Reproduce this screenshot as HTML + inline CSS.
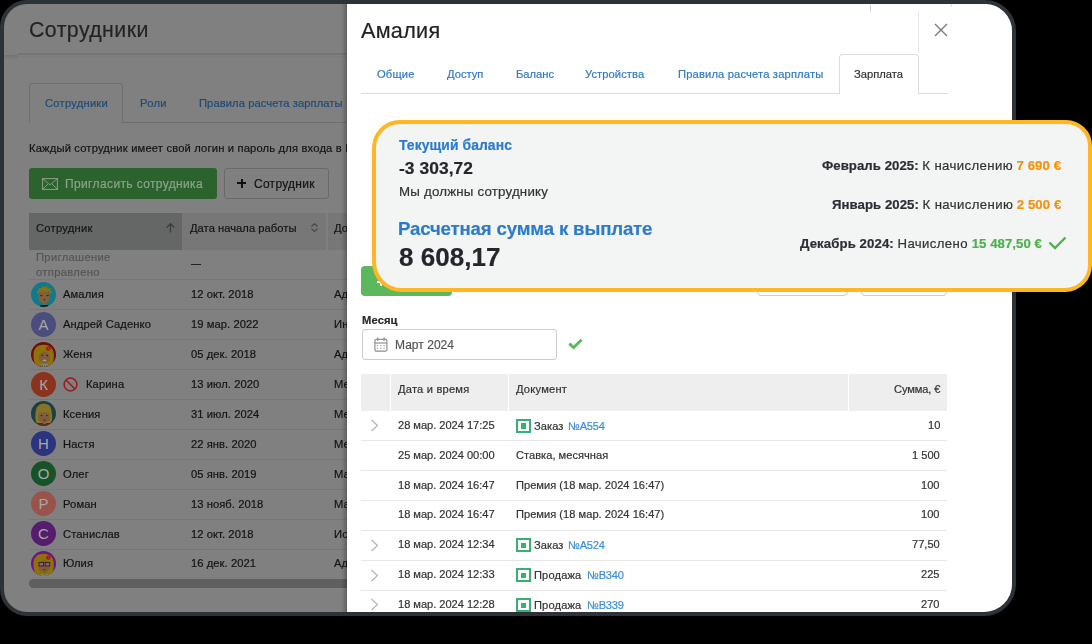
<!DOCTYPE html>
<html><head><meta charset="utf-8"><style>
html,body{margin:0;padding:0;}
body{width:1092px;height:644px;background:#000;position:relative;overflow:hidden;font-family:"Liberation Sans",sans-serif;}
.frame{position:absolute;left:0;top:0;width:1016px;height:616px;box-sizing:border-box;border:4px solid #2c3237;border-radius:27px 31px 32px 27px;overflow:hidden;background:#808080;}
.pg{position:absolute;left:-4px;top:-4px;width:1092px;height:644px;}
.t{position:absolute;white-space:nowrap;will-change:transform;-webkit-text-stroke:0.2px currentColor;}
.r{position:absolute;}
.av{width:25px;height:25px;border-radius:50%;color:#a8a8a8;font-size:15px;line-height:25px;text-align:center;}
</style></head><body>
<div class="frame"><div class="pg">
<div class="r" style="left:18.00px;top:52.90px;width:994.00px;height:2.60px;background:linear-gradient(#767676,#727272)"></div>
<div class="r" style="left:18.00px;top:55.50px;width:994.00px;height:2.20px;background:linear-gradient(#7a7a7a,#7f7f7f)"></div>
<div class="r" style="left:4.00px;top:54.80px;width:14.00px;height:3.90px;background:linear-gradient(#747474,#7d7d7d)"></div>
<div class="t" style="left:29.20px;top:20.19px;font-size:21.3px;line-height:21.3px;color:#242424;font-weight:400;letter-spacing:0.44px;">Сотрудники</div>
<div class="r" style="left:29.00px;top:122.00px;width:317.00px;height:1.00px;background:#6e6e6e"></div>
<div class="r" style="left:29px;top:82.5px;width:93.6px;height:40px;border:1px solid #6e6e6e;border-bottom:none;border-radius:4px 4px 0 0;background:#808080;box-sizing:border-box"></div>
<div class="t" style="left:44.80px;top:97.78px;font-size:11.2px;line-height:11.2px;color:#1f4a77;font-weight:400;letter-spacing:0.24px;">Сотрудники</div>
<div class="t" style="left:140.10px;top:97.78px;font-size:11.2px;line-height:11.2px;color:#1f4a77;font-weight:400;letter-spacing:0.3px;">Роли</div>
<div class="t" style="left:198.90px;top:97.78px;font-size:11.2px;line-height:11.2px;color:#1f4a77;font-weight:400;letter-spacing:0.08px;">Правила расчета зарплаты</div>
<div class="t" style="left:29.00px;top:142.68px;font-size:11.2px;line-height:11.2px;color:#141414;font-weight:400;letter-spacing:0.17px;">Каждый сотрудник имеет свой логин и пароль для входа в R</div>
<div class="r" style="left:29.00px;top:168.00px;width:188.00px;height:31.00px;background:#2b622d;border-radius:3px"></div>
<svg class="r" style="left:42px;top:178px" width="16" height="12" viewBox="0 0 16 12"><rect x="0.6" y="0.6" width="14.8" height="10.8" fill="none" stroke="#8aa08a" stroke-width="1"/><path d="M1 1 L8 6.8 L15 1 M1 11 L6 6 M15 11 L10 6" fill="none" stroke="#8aa08a" stroke-width="0.9"/></svg>
<div class="t" style="left:64.70px;top:178.30px;font-size:12px;line-height:12px;color:#8ca28c;font-weight:400;letter-spacing:0.37px;">Пригласить сотрудника</div>
<div class="r" style="left:224.3px;top:168px;width:104.4px;height:31px;border:1px solid #6a6a6a;border-radius:3px;box-sizing:border-box"></div>
<div class="r" style="left:237.30px;top:182.10px;width:9.20px;height:2.40px;background:#111"></div>
<div class="r" style="left:240.70px;top:178.70px;width:2.40px;height:9.20px;background:#111"></div>
<div class="t" style="left:254.30px;top:178.30px;font-size:12px;line-height:12px;color:#141414;font-weight:400;letter-spacing:0.27px;">Сотрудник</div>
<div class="r" style="left:29.00px;top:213.30px;width:153.00px;height:37.20px;background:#646765"></div>
<div class="r" style="left:182.00px;top:213.30px;width:143.60px;height:37.20px;background:#777777"></div>
<div class="r" style="left:325.60px;top:213.30px;width:1.80px;height:37.20px;background:#7e7e7e"></div>
<div class="r" style="left:327.70px;top:213.30px;width:19.30px;height:37.20px;background:#777777"></div>
<div class="t" style="left:36.30px;top:223.48px;font-size:11.2px;line-height:11.2px;color:#141414;font-weight:400;letter-spacing:0.25px;">Сотрудник</div>
<div class="t" style="left:190.20px;top:223.48px;font-size:11.2px;line-height:11.2px;color:#141414;font-weight:400;letter-spacing:0.03px;">Дата начала работы</div>
<div class="t" style="left:333.60px;top:223.48px;font-size:11.2px;line-height:11.2px;color:#141414;font-weight:400;letter-spacing:0.1px;">Должность</div>
<svg class="r" style="left:165px;top:222px" width="11" height="12" viewBox="0 0 11 12"><path d="M5.5 10.5 V1.8 M1.6 5.6 L5.5 1.7 L9.4 5.6" fill="none" stroke="#3c3c3c" stroke-width="1.3"/></svg>
<svg class="r" style="left:310px;top:222px" width="9" height="11" viewBox="0 0 9 11"><path d="M1.5 4.5 L4.5 1.8 L7.5 4.5 M1.5 6.7 L4.5 9.4 L7.5 6.7" fill="none" stroke="#444" stroke-width="1.1"/></svg>
<div class="t" style="left:36.30px;top:252.38px;font-size:11.2px;line-height:11.2px;color:#555555;font-weight:400;letter-spacing:0.33px;">Приглашение</div>
<div class="t" style="left:36.30px;top:266.68px;font-size:11.2px;line-height:11.2px;color:#555555;font-weight:400;letter-spacing:0.33px;">отправлено</div>
<div class="r" style="left:190.80px;top:263.60px;width:9.80px;height:1.20px;background:#222"></div>
<div class="r" style="left:29.00px;top:279.40px;width:318.00px;height:1.00px;background:#777777"></div>
<div class="r" id="img1" style="left:31px;top:281.85px;width:25px;height:25px"><svg width="25" height="25" viewBox="0 0 25 25"><defs><clipPath id="c107a8c"><circle cx="12.5" cy="12.5" r="12.5"/></clipPath></defs><g clip-path="url(#c107a8c)"><rect width="25" height="25" fill="#107a8c"/><ellipse cx="13.2" cy="15" rx="6" ry="6.6" fill="#82603a"/><rect x="11.8" y="20" width="3" height="3" fill="#82603a"/><path d="M9.5 23 H17 L17.5 25 H9 Z" fill="#1c1c1c"/><path d="M6.5 12 L5.5 9 L8 8.5 L7.5 5.5 L10.5 6.5 L11.5 3.5 L13.5 5.5 L16 3.5 L16.5 6.5 L20 6 L19 9 L21.5 9.5 L19.5 12 L18 9.5 L14 9.2 L9.5 9.8 Z" fill="#857317"/><ellipse cx="10.3" cy="13.6" rx="1.3" ry="0.6" fill="#222"/><ellipse cx="16.7" cy="13.6" rx="1.3" ry="0.6" fill="#222"/><path d="M12.2 17.2 H14.6 L13.4 18.6 Z" fill="#3e2418"/></g></svg></div>
<div class="t" style="left:63.10px;top:289.38px;font-size:11.2px;line-height:11.2px;color:#141414;font-weight:400;letter-spacing:0.1px;">Амалия</div>
<div class="t" style="left:190.60px;top:289.38px;font-size:11.2px;line-height:11.2px;color:#141414;font-weight:400;letter-spacing:0.06px;">12 окт. 2018</div>
<div class="t" style="left:333.60px;top:289.38px;font-size:11.2px;line-height:11.2px;color:#141414;font-weight:400;letter-spacing:0.1px;">Администратор</div>
<div class="r" style="left:29.00px;top:309.30px;width:318.00px;height:1.00px;background:#777777"></div>
<div class="r av" style="left:31px;top:311.75px;background:#4a4d7e">А</div>
<div class="t" style="left:63.10px;top:319.28px;font-size:11.2px;line-height:11.2px;color:#141414;font-weight:400;letter-spacing:0.1px;">Андрей Саденко</div>
<div class="t" style="left:190.60px;top:319.28px;font-size:11.2px;line-height:11.2px;color:#141414;font-weight:400;letter-spacing:0.06px;">19 мар. 2022</div>
<div class="t" style="left:333.60px;top:319.28px;font-size:11.2px;line-height:11.2px;color:#141414;font-weight:400;letter-spacing:0.1px;">Инженер</div>
<div class="r" style="left:29.00px;top:339.20px;width:318.00px;height:1.00px;background:#777777"></div>
<div class="r" id="img2" style="left:31px;top:341.65px;width:25px;height:25px"><svg width="25" height="25" viewBox="0 0 25 25"><defs><clipPath id="c6e0d0d"><circle cx="12.5" cy="12.5" r="12.5"/></clipPath></defs><g clip-path="url(#c6e0d0d)"><rect width="25" height="25" fill="#6e0d0d"/><path d="M2.5 14 C2 5 8 2.5 13 2.8 C19 3 23 7 22.8 13 C23 18 22 22 19 24 L6 24 C3.5 22 2.5 18 2.5 14 Z" fill="#8c7208"/><ellipse cx="13.5" cy="15.5" rx="5.6" ry="5.8" fill="#7f5d3a"/><path d="M8 10.5 C10 8 15 8 19 10.5 L18.5 8 L13 6.5 L8.5 8 Z" fill="#8c7208"/><circle cx="17.3" cy="6.6" r="2.2" fill="#a81414"/><circle cx="17.3" cy="6.6" r="0.7" fill="#c85050"/><circle cx="11.2" cy="13.3" r="0.8" fill="#3a2a20"/><circle cx="16.2" cy="13.5" r="0.8" fill="#222"/><ellipse cx="13.5" cy="18.4" rx="2" ry="0.9" fill="#9a9a9a"/><rect x="10" y="22.2" width="7" height="2.8" fill="#8a8a8a"/><path d="M10.5 24 h1.5 M13 24 h1 M15 24 h1.5" stroke="#222" stroke-width="0.9"/></g></svg></div>
<div class="t" style="left:63.10px;top:349.18px;font-size:11.2px;line-height:11.2px;color:#141414;font-weight:400;letter-spacing:0.1px;">Женя</div>
<div class="t" style="left:190.60px;top:349.18px;font-size:11.2px;line-height:11.2px;color:#141414;font-weight:400;letter-spacing:0.06px;">05 дек. 2018</div>
<div class="t" style="left:333.60px;top:349.18px;font-size:11.2px;line-height:11.2px;color:#141414;font-weight:400;letter-spacing:0.1px;">Администратор</div>
<div class="r" style="left:29.00px;top:369.10px;width:318.00px;height:1.00px;background:#777777"></div>
<div class="r av" style="left:31px;top:371.55px;background:#8c331d">К</div>
<svg class="r" style="left:63px;top:376.75px" width="15" height="15" viewBox="0 0 15 15"><circle cx="7.5" cy="7.5" r="6.4" fill="none" stroke="#9a1a1a" stroke-width="1.5"/><path d="M3 3 L12 12" stroke="#9a1a1a" stroke-width="1.5"/></svg>
<div class="t" style="left:85.70px;top:379.08px;font-size:11.2px;line-height:11.2px;color:#141414;font-weight:400;letter-spacing:0.1px;">Карина</div>
<div class="t" style="left:190.60px;top:379.08px;font-size:11.2px;line-height:11.2px;color:#141414;font-weight:400;letter-spacing:0.06px;">13 июл. 2020</div>
<div class="t" style="left:333.60px;top:379.08px;font-size:11.2px;line-height:11.2px;color:#141414;font-weight:400;letter-spacing:0.1px;">Менеджер</div>
<div class="r" style="left:29.00px;top:399.00px;width:318.00px;height:1.00px;background:#777777"></div>
<div class="r" id="img3" style="left:31px;top:401.45px;width:25px;height:25px"><svg width="25" height="25" viewBox="0 0 25 25"><defs><clipPath id="c1b4040"><circle cx="12.5" cy="12.5" r="12.5"/></clipPath></defs><g clip-path="url(#c1b4040)"><rect width="25" height="25" fill="#1b4040"/><path d="M5.5 22 C3.5 17 4.5 12 5 9 C6 4 10 2.5 13.5 2.8 C18 3 20.5 6 20.5 10 C21 14 22 19 19.5 22 Z" fill="#857326"/><rect x="7.5" y="11.5" width="11.5" height="9" rx="3" fill="#7f5d3a"/><rect x="11.8" y="19" width="3.2" height="4" fill="#7f5d3a"/><path d="M7 12 C8 6 17 6 19 12 L19 9 C17 4 9 4 7 9 Z" fill="#857326"/><circle cx="10.5" cy="14.5" r="0.8" fill="#3a2420"/><circle cx="16" cy="14.5" r="0.8" fill="#3a2420"/><ellipse cx="13.4" cy="19" rx="1.1" ry="0.6" fill="#1a1a1a"/><path d="M8.5 23.5 L11.5 22.5 L13.4 24 L15.5 22.5 L18.5 23.5 L18.5 25 H8.5 Z" fill="#8e1a1a"/></g></svg></div>
<div class="t" style="left:63.10px;top:408.98px;font-size:11.2px;line-height:11.2px;color:#141414;font-weight:400;letter-spacing:0.1px;">Ксения</div>
<div class="t" style="left:190.60px;top:408.98px;font-size:11.2px;line-height:11.2px;color:#141414;font-weight:400;letter-spacing:0.06px;">31 июл. 2024</div>
<div class="t" style="left:333.60px;top:408.98px;font-size:11.2px;line-height:11.2px;color:#141414;font-weight:400;letter-spacing:0.1px;">Менеджер</div>
<div class="r" style="left:29.00px;top:428.90px;width:318.00px;height:1.00px;background:#777777"></div>
<div class="r av" style="left:31px;top:431.35px;background:#2b347e">Н</div>
<div class="t" style="left:63.10px;top:438.88px;font-size:11.2px;line-height:11.2px;color:#141414;font-weight:400;letter-spacing:0.1px;">Настя</div>
<div class="t" style="left:190.60px;top:438.88px;font-size:11.2px;line-height:11.2px;color:#141414;font-weight:400;letter-spacing:0.06px;">22 янв. 2020</div>
<div class="t" style="left:333.60px;top:438.88px;font-size:11.2px;line-height:11.2px;color:#141414;font-weight:400;letter-spacing:0.1px;">Менеджер</div>
<div class="r" style="left:29.00px;top:458.80px;width:318.00px;height:1.00px;background:#777777"></div>
<div class="r av" style="left:31px;top:461.25px;background:#175228">О</div>
<div class="t" style="left:63.10px;top:468.78px;font-size:11.2px;line-height:11.2px;color:#141414;font-weight:400;letter-spacing:0.1px;">Олег</div>
<div class="t" style="left:190.60px;top:468.78px;font-size:11.2px;line-height:11.2px;color:#141414;font-weight:400;letter-spacing:0.06px;">05 янв. 2019</div>
<div class="t" style="left:333.60px;top:468.78px;font-size:11.2px;line-height:11.2px;color:#141414;font-weight:400;letter-spacing:0.1px;">Мастер</div>
<div class="r" style="left:29.00px;top:488.70px;width:318.00px;height:1.00px;background:#777777"></div>
<div class="r av" style="left:31px;top:491.15px;background:#9a534a">Р</div>
<div class="t" style="left:63.10px;top:498.68px;font-size:11.2px;line-height:11.2px;color:#141414;font-weight:400;letter-spacing:0.1px;">Роман</div>
<div class="t" style="left:190.60px;top:498.68px;font-size:11.2px;line-height:11.2px;color:#141414;font-weight:400;letter-spacing:0.06px;">13 нояб. 2018</div>
<div class="t" style="left:333.60px;top:498.68px;font-size:11.2px;line-height:11.2px;color:#141414;font-weight:400;letter-spacing:0.1px;">Мастер</div>
<div class="r" style="left:29.00px;top:518.60px;width:318.00px;height:1.00px;background:#777777"></div>
<div class="r av" style="left:31px;top:521.05px;background:#561c6e">С</div>
<div class="t" style="left:63.10px;top:528.58px;font-size:11.2px;line-height:11.2px;color:#141414;font-weight:400;letter-spacing:0.1px;">Станислав</div>
<div class="t" style="left:190.60px;top:528.58px;font-size:11.2px;line-height:11.2px;color:#141414;font-weight:400;letter-spacing:0.06px;">12 окт. 2018</div>
<div class="t" style="left:333.60px;top:528.58px;font-size:11.2px;line-height:11.2px;color:#141414;font-weight:400;letter-spacing:0.1px;">Исполнитель</div>
<div class="r" style="left:29.00px;top:548.50px;width:318.00px;height:1.00px;background:#777777"></div>
<div class="r" id="img4" style="left:31px;top:550.95px;width:25px;height:25px"><svg width="25" height="25" viewBox="0 0 25 25"><defs><clipPath id="c6a1488"><circle cx="12.5" cy="12.5" r="12.5"/></clipPath></defs><g clip-path="url(#c6a1488)"><rect width="25" height="25" fill="#6a1488"/><path d="M2.5 14 C2 5 8 2.5 13 2.8 C19 3 23 7 22.8 13 C23 18 22 22 19 24 L6 24 C3.5 22 2.5 18 2.5 14 Z" fill="#8c7208"/><ellipse cx="13.3" cy="15.5" rx="5.8" ry="6.2" fill="#7f5d3a"/><path d="M8 10.5 C10 8 15 8 19 10.5 L18.5 8 L13 6.5 L8.5 8 Z" fill="#8c7208"/><rect x="8" y="11.4" width="4.6" height="3.6" fill="#a2568a" stroke="#1e1e1e" stroke-width="0.8"/><rect x="14.2" y="11.4" width="4.6" height="3.6" fill="#a2568a" stroke="#1e1e1e" stroke-width="0.8"/><circle cx="17.3" cy="6.6" r="2.2" fill="#a81414"/><circle cx="17.3" cy="6.6" r="0.7" fill="#c85050"/><ellipse cx="13.4" cy="18.6" rx="1.5" ry="0.7" fill="#8a1414"/><path d="M9 25 L10.5 23 L13.4 24.2 L16.3 23 L18 25 Z" fill="#6a8aa8"/></g></svg></div>
<div class="t" style="left:63.10px;top:558.48px;font-size:11.2px;line-height:11.2px;color:#141414;font-weight:400;letter-spacing:0.1px;">Юлия</div>
<div class="t" style="left:190.60px;top:558.48px;font-size:11.2px;line-height:11.2px;color:#141414;font-weight:400;letter-spacing:0.06px;">16 дек. 2021</div>
<div class="t" style="left:333.60px;top:558.48px;font-size:11.2px;line-height:11.2px;color:#141414;font-weight:400;letter-spacing:0.1px;">Администратор</div>
<div class="r" style="left:28.80px;top:578.80px;width:371.20px;height:8.80px;background:#5f5f5f;border-radius:5px"></div>
<div class="r" style="left:341.00px;top:4.00px;width:6.00px;height:608.00px;background:linear-gradient(to right, rgba(0,0,0,0), rgba(0,0,0,0.1) 50%, rgba(0,0,0,0.27))"></div>
<div class="r" style="left:347.00px;top:4.00px;width:665.00px;height:608.00px;background:#fff"></div>
<div class="t" style="left:361.20px;top:19.84px;font-size:21.6px;line-height:21.6px;color:#222;font-weight:400;letter-spacing:0.3px;">Амалия</div>
<div class="r" style="left:870.00px;top:4.50px;width:1.00px;height:7.50px;background:#d2d2d2"></div>
<div class="r" style="left:951.00px;top:4.00px;width:1.00px;height:2.50px;background:#e2e2e2"></div>
<div class="r" style="left:918.00px;top:12.00px;width:1.00px;height:41.00px;background:#e8e8e8"></div>
<svg class="r" style="left:933.5px;top:23px" width="14" height="14" viewBox="0 0 14 14"><path d="M1 1 L13 13 M13 1 L1 13" stroke="#7a7a7a" stroke-width="1.4"/></svg>
<div class="r" style="left:361.00px;top:93.00px;width:587.00px;height:1.00px;background:#dddddd"></div>
<div class="t" style="left:377.00px;top:69.38px;font-size:11.2px;line-height:11.2px;color:#3079c2;font-weight:400;letter-spacing:0.15px;">Общие</div>
<div class="t" style="left:446.80px;top:69.38px;font-size:11.2px;line-height:11.2px;color:#3079c2;font-weight:400;letter-spacing:0px;">Доступ</div>
<div class="t" style="left:516.00px;top:69.38px;font-size:11.2px;line-height:11.2px;color:#3079c2;font-weight:400;letter-spacing:0px;">Баланс</div>
<div class="t" style="left:585.30px;top:69.38px;font-size:11.2px;line-height:11.2px;color:#3079c2;font-weight:400;letter-spacing:0.07px;">Устройства</div>
<div class="t" style="left:677.90px;top:69.38px;font-size:11.2px;line-height:11.2px;color:#3079c2;font-weight:400;letter-spacing:0.15px;">Правила расчета зарплаты</div>
<div class="r" style="left:839.2px;top:54.3px;width:80px;height:40px;border:1px solid #dddddd;border-bottom:none;border-radius:4px 4px 0 0;background:#fff;box-sizing:border-box"></div>
<div class="t" style="left:854.20px;top:69.38px;font-size:11.2px;line-height:11.2px;color:#333;font-weight:400;letter-spacing:0px;">Зарплата</div>
<div class="r" style="left:361.00px;top:266.00px;width:91.00px;height:30.40px;background:#5cb85c;border-radius:4px"></div>
<div class="r" style="left:376.60px;top:280.60px;width:9.00px;height:2.00px;background:#fff"></div>
<div class="r" style="left:380.10px;top:277.00px;width:2.00px;height:9.00px;background:#fff"></div>
<div class="r" style="left:756.8px;top:262px;width:91px;height:34.3px;border:1px solid #cccccc;border-radius:4px;box-sizing:border-box"></div>
<div class="r" style="left:861px;top:262px;width:86.4px;height:34.3px;border:1px solid #cccccc;border-radius:4px;box-sizing:border-box"></div>
<div class="t" style="left:361.50px;top:315.08px;font-size:11.2px;line-height:11.2px;color:#2a2a2a;font-weight:700;letter-spacing:0.12px;">Месяц</div>
<div class="r" style="left:361.6px;top:329px;width:195px;height:30.6px;border:1px solid #cccccc;border-radius:3px;box-sizing:border-box"></div>
<svg class="r" style="left:373.5px;top:337px" width="14" height="15" viewBox="0 0 14 15"><rect x="0.9" y="2.4" width="12" height="11.8" rx="1.6" fill="none" stroke="#8f8f8f" stroke-width="1.2"/><path d="M0.9 6 H12.9" stroke="#8f8f8f" stroke-width="1.2"/><path d="M3.6 0.6 V3.8 M10.1 0.6 V3.8" stroke="#8f8f8f" stroke-width="1.3"/><path d="M2.8 8.6h1.2M6.3 8.6h1.2M9.5 8.6h1.2M2.8 11.2h1.2M6.3 11.2h1.2M9.5 11.2h1.2" stroke="#8f8f8f" stroke-width="1"/></svg>
<div class="t" style="left:394.80px;top:339.30px;font-size:12px;line-height:12px;color:#555;font-weight:400;letter-spacing:0.03px;">Март 2024</div>
<svg class="r" style="left:566.5px;top:337.8px" width="17" height="13" viewBox="0 0 17 13"><path d="M2.3 5.6 L6.6 9.6 L14.6 1.8" fill="none" stroke="#5cb85c" stroke-width="2.8"/></svg>
<div class="r" style="left:361.00px;top:374.20px;width:586.00px;height:37.20px;background:#eeeeee"></div>
<div class="r" style="left:390.30px;top:374.20px;width:1.00px;height:36.70px;background:#fff"></div>
<div class="r" style="left:508.20px;top:374.20px;width:1.00px;height:36.70px;background:#fff"></div>
<div class="r" style="left:847.60px;top:374.20px;width:1.00px;height:36.70px;background:#fff"></div>
<div class="t" style="left:398.00px;top:383.96px;font-size:11.1px;line-height:11.1px;color:#333;font-weight:400;letter-spacing:0.22px;">Дата и время</div>
<div class="t" style="left:516.00px;top:383.96px;font-size:11.1px;line-height:11.1px;color:#333;font-weight:400;letter-spacing:0.23px;">Документ</div>
<div class="t" style="right:152.00px;top:383.96px;font-size:11.1px;line-height:11.1px;color:#333;font-weight:400;letter-spacing:-0.11px;">Сумма, €</div>
<svg class="r" style="left:369.5px;top:419.32px" width="10" height="13" viewBox="0 0 10 13"><path d="M1.5 1 L7.5 6.5 L1.5 12" fill="none" stroke="#b0b0b0" stroke-width="1.1"/></svg>
<div class="t" style="left:398.40px;top:419.87px;font-size:11.1px;line-height:11.1px;color:#333;font-weight:400;letter-spacing:-0.03px;">28 мар. 2024 17:25</div>
<div class="r" style="left:515.6px;top:418.82px;width:15px;height:14.2px;border:2px solid #38b072;box-sizing:border-box"><div style="position:absolute;left:3px;top:2.6px;width:5.2px;height:5.4px;background:#38b072"></div></div>
<div class="t" style="left:533.80px;top:421.06px;font-size:11.1px;line-height:11.1px;color:#333;font-weight:400;letter-spacing:0.08px;">Заказ</div>
<div class="t" style="left:568.00px;top:421.06px;font-size:11.1px;line-height:11.1px;color:#3a8ed8;font-weight:400;letter-spacing:-0.25px;">№A554</div>
<div class="t" style="right:152.00px;top:419.87px;font-size:11.1px;line-height:11.1px;color:#333;font-weight:400;letter-spacing:0px;">10</div>
<div class="r" style="left:361.00px;top:440.25px;width:586.00px;height:1.00px;background:#e8e8e8"></div>
<div class="t" style="left:398.40px;top:449.72px;font-size:11.1px;line-height:11.1px;color:#333;font-weight:400;letter-spacing:-0.03px;">25 мар. 2024 00:00</div>
<div class="t" style="left:516.20px;top:449.72px;font-size:11.1px;line-height:11.1px;color:#333;font-weight:400;letter-spacing:0.02px;">Ставка, месячная</div>
<div class="t" style="right:152.00px;top:449.72px;font-size:11.1px;line-height:11.1px;color:#333;font-weight:400;letter-spacing:0px;">1 500</div>
<div class="r" style="left:361.00px;top:470.10px;width:586.00px;height:1.00px;background:#e8e8e8"></div>
<div class="t" style="left:398.40px;top:479.56px;font-size:11.1px;line-height:11.1px;color:#333;font-weight:400;letter-spacing:-0.03px;">18 мар. 2024 16:47</div>
<div class="t" style="left:516.20px;top:479.56px;font-size:11.1px;line-height:11.1px;color:#333;font-weight:400;letter-spacing:0.02px;">Премия (18 мар. 2024 16:47)</div>
<div class="t" style="right:152.00px;top:479.56px;font-size:11.1px;line-height:11.1px;color:#333;font-weight:400;letter-spacing:0px;">100</div>
<div class="r" style="left:361.00px;top:499.95px;width:586.00px;height:1.00px;background:#e8e8e8"></div>
<div class="t" style="left:398.40px;top:509.42px;font-size:11.1px;line-height:11.1px;color:#333;font-weight:400;letter-spacing:-0.03px;">18 мар. 2024 16:47</div>
<div class="t" style="left:516.20px;top:509.42px;font-size:11.1px;line-height:11.1px;color:#333;font-weight:400;letter-spacing:0.02px;">Премия (18 мар. 2024 16:47)</div>
<div class="t" style="right:152.00px;top:509.42px;font-size:11.1px;line-height:11.1px;color:#333;font-weight:400;letter-spacing:0px;">100</div>
<div class="r" style="left:361.00px;top:529.80px;width:586.00px;height:1.00px;background:#e8e8e8"></div>
<svg class="r" style="left:369.5px;top:538.72px" width="10" height="13" viewBox="0 0 10 13"><path d="M1.5 1 L7.5 6.5 L1.5 12" fill="none" stroke="#b0b0b0" stroke-width="1.1"/></svg>
<div class="t" style="left:398.40px;top:539.27px;font-size:11.1px;line-height:11.1px;color:#333;font-weight:400;letter-spacing:-0.03px;">18 мар. 2024 12:34</div>
<div class="r" style="left:515.6px;top:538.22px;width:15px;height:14.2px;border:2px solid #38b072;box-sizing:border-box"><div style="position:absolute;left:3px;top:2.6px;width:5.2px;height:5.4px;background:#38b072"></div></div>
<div class="t" style="left:533.80px;top:540.47px;font-size:11.1px;line-height:11.1px;color:#333;font-weight:400;letter-spacing:0.08px;">Заказ</div>
<div class="t" style="left:568.00px;top:540.47px;font-size:11.1px;line-height:11.1px;color:#3a8ed8;font-weight:400;letter-spacing:-0.25px;">№A524</div>
<div class="t" style="right:152.00px;top:539.27px;font-size:11.1px;line-height:11.1px;color:#333;font-weight:400;letter-spacing:0px;">77,50</div>
<div class="r" style="left:361.00px;top:559.65px;width:586.00px;height:1.00px;background:#e8e8e8"></div>
<svg class="r" style="left:369.5px;top:568.57px" width="10" height="13" viewBox="0 0 10 13"><path d="M1.5 1 L7.5 6.5 L1.5 12" fill="none" stroke="#b0b0b0" stroke-width="1.1"/></svg>
<div class="t" style="left:398.40px;top:569.12px;font-size:11.1px;line-height:11.1px;color:#333;font-weight:400;letter-spacing:-0.03px;">18 мар. 2024 12:33</div>
<div class="r" style="left:515.6px;top:568.07px;width:15px;height:14.2px;border:2px solid #38b072;box-sizing:border-box"><div style="position:absolute;left:3px;top:2.6px;width:5.2px;height:5.4px;background:#38b072"></div></div>
<div class="t" style="left:533.80px;top:570.32px;font-size:11.1px;line-height:11.1px;color:#333;font-weight:400;letter-spacing:0.15px;">Продажа</div>
<div class="t" style="left:586.50px;top:570.32px;font-size:11.1px;line-height:11.1px;color:#3a8ed8;font-weight:400;letter-spacing:-0.25px;">№B340</div>
<div class="t" style="right:152.00px;top:569.12px;font-size:11.1px;line-height:11.1px;color:#333;font-weight:400;letter-spacing:0px;">225</div>
<div class="r" style="left:361.00px;top:589.50px;width:586.00px;height:1.00px;background:#e8e8e8"></div>
<svg class="r" style="left:369.5px;top:598.42px" width="10" height="13" viewBox="0 0 10 13"><path d="M1.5 1 L7.5 6.5 L1.5 12" fill="none" stroke="#b0b0b0" stroke-width="1.1"/></svg>
<div class="t" style="left:398.40px;top:598.97px;font-size:11.1px;line-height:11.1px;color:#333;font-weight:400;letter-spacing:-0.03px;">18 мар. 2024 12:28</div>
<div class="r" style="left:515.6px;top:597.92px;width:15px;height:14.2px;border:2px solid #38b072;box-sizing:border-box"><div style="position:absolute;left:3px;top:2.6px;width:5.2px;height:5.4px;background:#38b072"></div></div>
<div class="t" style="left:533.80px;top:600.17px;font-size:11.1px;line-height:11.1px;color:#333;font-weight:400;letter-spacing:0.15px;">Продажа</div>
<div class="t" style="left:586.50px;top:600.17px;font-size:11.1px;line-height:11.1px;color:#3a8ed8;font-weight:400;letter-spacing:-0.25px;">№B339</div>
<div class="t" style="right:152.00px;top:598.97px;font-size:11.1px;line-height:11.1px;color:#333;font-weight:400;letter-spacing:0px;">270</div>

</div></div>
<div class="r" style="left:372px;top:120px;width:720px;height:172px;border:4px solid #fcb723;border-radius:28px 26px 27px 30px;background:#f3f4f4;box-sizing:border-box"></div>
<div class="t" style="left:399.00px;top:139.19px;font-size:13.9px;line-height:13.9px;color:#2a7ccb;font-weight:700;letter-spacing:0.08px;">Текущий баланс</div>
<div class="t" style="left:399.00px;top:159.61px;font-size:17.4px;line-height:17.4px;color:#23272b;font-weight:700;letter-spacing:0.06px;">-3 303,72</div>
<div class="t" style="left:399.00px;top:185.39px;font-size:13.3px;line-height:13.3px;color:#333;font-weight:400;letter-spacing:0.2px;">Мы должны сотруднику</div>
<div class="t" style="left:398.40px;top:219.59px;font-size:18.6px;line-height:18.6px;color:#2a7ccb;font-weight:700;letter-spacing:-0.14px;">Расчетная сумма к выплате</div>
<div class="t" style="left:399.40px;top:244.30px;font-size:26px;line-height:26px;color:#23272b;font-weight:700;letter-spacing:0.05px;">8 608,17</div>
<div class="t" style="right:31.10px;top:159.28px;font-size:13.2px;line-height:13.2px;color:#333;white-space:nowrap"><b style="color:#2b2f33;letter-spacing:0.05px">Февраль 2025:</b> <span style="letter-spacing:0.38px">К начислению</span> <b style="color:#f5900f;letter-spacing:0.06px">7 690 €</b></div>
<div class="t" style="right:31.10px;top:198.28px;font-size:13.2px;line-height:13.2px;color:#333;white-space:nowrap"><b style="color:#2b2f33;letter-spacing:0.05px">Январь 2025:</b> <span style="letter-spacing:0.38px">К начислению</span> <b style="color:#f5900f;letter-spacing:0.06px">2 500 €</b></div>
<div class="t" style="right:49.70px;top:237.08px;font-size:13.2px;line-height:13.2px;color:#333;white-space:nowrap"><b style="color:#2b2f33;letter-spacing:0.1px">Декабрь 2024:</b> <span style="letter-spacing:0.38px">Начислено</span> <b style="color:#4fb04f;letter-spacing:0.06px">15 487,50 €</b></div>
<svg class="r" style="left:1048px;top:236px" width="19" height="14" viewBox="0 0 19 14"><path d="M1.5 6.5 L7 12 L17.5 1.5" fill="none" stroke="#4fb04f" stroke-width="2.4"/></svg>
</body></html>
